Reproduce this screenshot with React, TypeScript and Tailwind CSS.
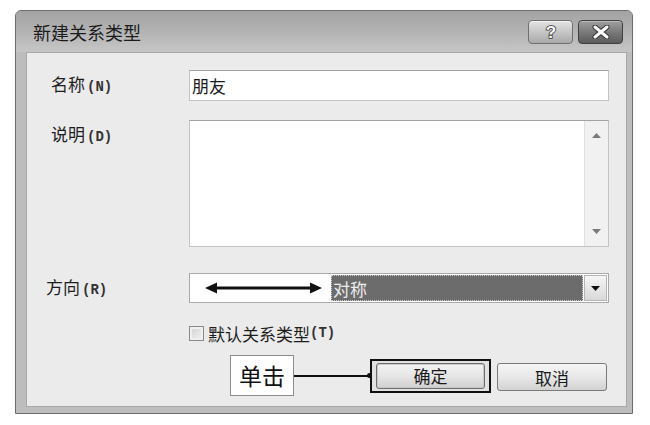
const cjk = { fontFamily: '"Noto Sans CJK SC", "Noto Sans", sans-serif' };
const mono = { fontFamily: '"Liberation Mono", "DejaVu Sans Mono", monospace' };

function Label({ text, hot, className = "" }: { text: string; hot: string; className?: string }) {
  return (
    <div className={`w-[138px] shrink-0 text-[17px] leading-[18px] text-[#1e1e1e] ${className}`} style={cjk}>
      {text}
      <span className="ml-[2px] text-[14px] font-semibold text-[#333]" style={mono}>
        ({hot})
      </span>
    </div>
  );
}

function TitleButtons() {
  return (
    <div className="flex gap-[5px]">
      <div className="flex h-[24px] w-[45px] items-center justify-center rounded-[4px] border border-[#6f6f6f] bg-gradient-to-b from-[#e4e4e4] via-[#c6c6c6] to-[#a9a9a9] shadow-[inset_0_1px_0_#f4f4f4]">
        <svg width="14" height="18" viewBox="0 0 14 18">
          <text
            x="7"
            y="15"
            textAnchor="middle"
            fontSize="17"
            fontWeight="bold"
            fontFamily="Liberation Sans, Arial, sans-serif"
            fill="#f8f8f8"
            stroke="#3a3a3a"
            strokeWidth="1.6"
            paintOrder="stroke"
          >
            ?
          </text>
        </svg>
      </div>
      <div className="flex h-[24px] w-[45px] items-center justify-center rounded-[4px] border border-[#3f3f3f] bg-gradient-to-b from-[#a0a0a0] via-[#7a7a7a] to-[#5b5b5b] shadow-[inset_0_1px_0_#bcbcbc]">
        <svg width="18" height="14" viewBox="0 0 18 14">
          <path d="M3 2 L15 12 M15 2 L3 12" stroke="#333" strokeWidth="5" strokeLinecap="round" />
          <path d="M3 2 L15 12 M15 2 L3 12" stroke="#fafafa" strokeWidth="3" strokeLinecap="round" />
        </svg>
      </div>
    </div>
  );
}

function DoubleArrow() {
  return (
    <svg width="117" height="12" viewBox="0 0 117 12">
      <line x1="8" y1="6" x2="108" y2="6" stroke="#111" strokeWidth="3" />
      <polygon points="0,6 12,0.5 12,11.5" fill="#111" />
      <polygon points="117,6 105,0.5 105,11.5" fill="#111" />
    </svg>
  );
}

export default function App() {
  return (
    <div className="h-[425px] w-[650px] bg-white pl-[15px] pt-[10px]">
      <div className="flex h-[404px] w-[618px] flex-col rounded-t-[6px] border border-[#6d6d6d] bg-[#bdbdbd]">
        {/* title bar */}
        <div className="flex h-[41px] shrink-0 items-center justify-between rounded-t-[5px] bg-gradient-to-b from-[#a3a3a3] via-[#b3b3b3] to-[#c6c6c6] pl-[17px] pr-[9px]">
          <span className="text-[18px] leading-none text-[#1c1c1c]" style={cjk}>
            新建关系类型
          </span>
          <TitleButtons />
        </div>

        {/* body with frame */}
        <div className="flex flex-1 pb-[6px] pl-[10px] pr-[5px]">
          <div className="flex flex-1 flex-col border border-[#a8a8a8] bg-[#ebebeb] pl-[24px] pr-[17px] pt-[17px]">
            {/* name */}
            <div className="flex h-[31px] items-center">
              <Label text="名称" hot="N" />
              <div className="flex h-full flex-1 items-center border border-[#c3c3c3] border-t-[#a3a3a3] bg-white pl-[2px]">
                <span className="text-[17px] text-[#1a1a1a]" style={cjk}>
                  朋友
                </span>
              </div>
            </div>

            {/* description */}
            <div className="mt-[19px] flex h-[127px]">
              <Label text="说明" hot="D" className="pt-[5px]" />
              <div className="flex h-full flex-1 border border-[#c3c3c3] border-t-[#a3a3a3] bg-white">
                <div className="flex-1" />
                <div className="flex w-[24px] flex-col items-center justify-between border-l border-[#e0e0e0] bg-[#f1f1f1] py-[12px]">
                  <svg width="9" height="5" viewBox="0 0 9 5">
                    <polygon points="4.5,0 9,5 0,5" fill="#7a7a7a" />
                  </svg>
                  <svg width="9" height="5" viewBox="0 0 9 5">
                    <polygon points="0,0 9,0 4.5,5" fill="#7a7a7a" />
                  </svg>
                </div>
              </div>
            </div>

            {/* direction */}
            <div className="mt-[26px] flex h-[30px] items-center">
              <Label text="方向" hot="R" className="-ml-[5px] w-[143px]" />
              <div className="flex h-full flex-1 items-center border border-[#a9a9a9] bg-white p-[1px]">
                <div className="flex w-[140px] shrink-0 items-center pl-[14px]">
                  <DoubleArrow />
                </div>
                <div className="flex h-full flex-1 items-center border border-dotted border-[#cfcfcf] bg-[#6c6c6c] pl-[1px]">
                  <span className="text-[17px] leading-none text-[#ececec]" style={cjk}>
                    对称
                  </span>
                </div>
                <div className="ml-[1px] flex h-full w-[23px] items-center justify-center border border-[#b5b5b5] bg-gradient-to-b from-[#f6f6f6] to-[#d9d9d9]">
                  <svg width="9" height="5" viewBox="0 0 9 5">
                    <polygon points="0,0 9,0 4.5,5" fill="#111" />
                  </svg>
                </div>
              </div>
            </div>

            {/* default checkbox */}
            <div className="mt-[21px] flex h-[18px] items-center pl-[138px]">
              <div className="h-[15px] w-[15px] border border-[#8a8a8a] bg-gradient-to-br from-[#d0d0d0] to-[#f4f4f4] shadow-[inset_0_0_0_2px_#f0f0f0]" />
              <span className="ml-[4px] text-[17px] leading-none text-[#1e1e1e]" style={cjk}>
                默认关系类型
              </span>
              <span className="text-[14px] font-semibold text-[#333]" style={mono}>
                (T)
              </span>
            </div>

            {/* buttons */}
            <div className="mt-[13px] flex h-[41px] items-center pl-[179px]">
              <div className="flex h-[41px] w-[64px] items-center justify-center border border-[#8c8c8c] bg-white">
                <span className="text-[23px] leading-none text-[#111]" style={cjk}>
                  单击
                </span>
              </div>
              <div className="h-[2px] w-[76px] bg-[#111]" />
              <div className="h-[5px] w-[5px] -ml-[3px] rounded-full bg-[#111]" />
              <div className="flex h-[34px] w-[121px] items-center justify-center border-2 border-[#111] bg-[#e2e2e2] -ml-[2px]">
                <div className="flex h-[26px] w-[109px] items-center justify-center rounded-[3px] border border-[#6e6e6e] bg-gradient-to-b from-[#f3f3f3] via-[#e6e6e6] to-[#cfcfcf] shadow-[inset_0_0_0_1px_#c9c9c9]">
                  <span className="text-[17px] leading-none text-[#1a1a1a]" style={cjk}>
                    确定
                  </span>
                </div>
              </div>
              <div className="ml-[6px] mt-[3px] flex h-[28px] w-[110px] items-center justify-center rounded-[3px] border border-[#7a7a7a] bg-gradient-to-b from-[#f5f5f5] via-[#e8e8e8] to-[#d2d2d2]">
                <span className="text-[17px] leading-none text-[#1a1a1a]" style={cjk}>
                  取消
                </span>
              </div>
            </div>
          </div>
        </div>
      </div>
    </div>
  );
}
